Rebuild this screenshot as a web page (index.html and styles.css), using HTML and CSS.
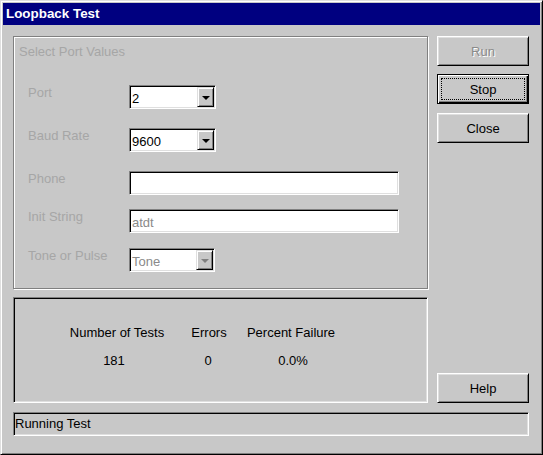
FILE: index.html
```html
<!DOCTYPE html>
<html>
<head>
<meta charset="utf-8">
<link rel="stylesheet" href="styles.css">
<title>Loopback Test</title>
</head>
<body>
<div class="window">
  <div class="titlebar">Loopback Test</div>
  <div class="content">
    <div class="main">
      <div class="leftcol">
        <div class="groupbox">
          <div class="gb-title">Select Port Values</div>
          <div class="row r1">
            <div class="label">Port</div>
            <div class="combo w87"><span class="ctext">2</span><span class="dropbtn"><span class="arrow"></span></span></div>
          </div>
          <div class="row r2">
            <div class="label">Baud Rate</div>
            <div class="combo w87"><span class="ctext">9600</span><span class="dropbtn"><span class="arrow"></span></span></div>
          </div>
          <div class="row r3">
            <div class="label">Phone</div>
            <div class="field w270"></div>
          </div>
          <div class="row r4">
            <div class="label">Init String</div>
            <div class="field w270"><span class="ctext gray">atdt</span></div>
          </div>
          <div class="row r5">
            <div class="label">Tone or Pulse</div>
            <div class="combo w86"><span class="ctext gray">Tone</span><span class="dropbtn"><span class="arrow dis"></span></span></div>
          </div>
        </div>
        <div class="results">
          <div class="rgrid">
            <div class="c1">Number of Tests</div>
            <div class="c2">Errors</div>
            <div class="c3">Percent Failure</div>
            <div class="c1 v1">181</div>
            <div class="c2 v2">0</div>
            <div class="c3 v3">0.0%</div>
          </div>
        </div>
      </div>
      <div class="rightcol">
        <div class="btn disabled">Run</div>
        <div class="btn default"><span class="focus">Stop</span></div>
        <div class="btn">Close</div>
        <div class="btn help">Help</div>
      </div>
    </div>
    <div class="status">Running Test</div>
  </div>
</div>
</body>
</html>
```

FILE: styles.css
```css
* { box-sizing: border-box; }
html, body { margin: 0; padding: 0; background: #c8c8c8; }
body {
  font-family: "Liberation Sans", Arial, sans-serif;
  font-size: 13px;
  color: #000;
}
.window {
  width: 543px;
  height: 455px;
  background: #c8c8c8;
  border: 1px solid;
  border-color: #dfdfdf #000 #000 #dfdfdf;
  box-shadow: inset 1px 1px 0 #fff, inset -1px -1px 0 #808080;
  padding: 2px;
}
.titlebar {
  height: 22px;
  background: #000080;
  color: #fff;
  font-weight: bold;
  font-size: 13.4px;
  line-height: 22px;
  padding-left: 3px;
}
.content {
  padding: 11px 0 0 10px;
}
.main {
  display: flex;
  gap: 9px;
  height: 367px;
}
.leftcol {
  width: 415px;
  display: flex;
  flex-direction: column;
}
.groupbox {
  height: 253px;
  border: 1px solid #808080;
  box-shadow: inset 1px 1px 0 #fff, 1px 1px 0 #fff;
  padding: 7px 0 0 5px;
}
.gb-title {
  color: #a6a6a6;
  line-height: 15px;
  height: 15px;
}
.row {
  display: flex;
  height: 24px;
  padding-left: 9px;
}
.r1 { margin-top: 26px; }
.r2 { margin-top: 19px; }
.r3 { margin-top: 19px; }
.r4 { margin-top: 14px; }
.r5 { margin-top: 15px; }
.label {
  width: 101px;
  color: #a6a6a6;
  line-height: 15px;
}
.combo, .field {
  position: relative;
  height: 24px;
  background: #fff;
  border: 1px solid;
  border-color: #808080 #fff #fff #808080;
  box-shadow: inset 1px 1px 0 #000, inset -1px -1px 0 #dfdfdf;
  display: flex;
  align-items: center;
}
.w87 { width: 87px; }
.w86 { width: 86px; }
.w270 { width: 270px; }
.ctext {
  padding-left: 2px;
  line-height: 15px;
  margin-top: 2px;
}
.gray { color: #8a8a8a; }
.dropbtn {
  position: absolute;
  right: 1px;
  top: 1px;
  width: 17px;
  height: 20px;
  background: #c8c8c8;
  border: 1px solid;
  border-color: #dfdfdf #000 #000 #dfdfdf;
  box-shadow: inset 1px 1px 0 #fff, inset -1px -1px 0 #808080;
  display: flex;
  align-items: center;
  justify-content: center;
}
.arrow {
  width: 0;
  height: 0;
  border-left: 4px solid transparent;
  border-right: 4px solid transparent;
  border-top: 4px solid #000;
  margin-top: 1px;
}
.arrow.dis { border-top-color: #808080; }
.results {
  margin-top: 8px;
  height: 106px;
  border: 1px solid;
  border-color: #808080 #fff #fff #808080;
  box-shadow: inset 1px 1px 0 #000, inset -1px -1px 0 #dfdfdf;
}
.rgrid {
  display: grid;
  grid-template-columns: 100px 84px 80px;
  grid-template-rows: 15px 15px;
  row-gap: 13px;
  justify-items: center;
  padding: 27px 0 0 53px;
  line-height: 15px;
}
.rgrid > div { white-space: nowrap; }
.v1 { margin-right: 6px; }
.v2 { margin-right: 2px; }
.v3 { margin-left: 4px; }
.rightcol {
  width: 92px;
  display: flex;
  flex-direction: column;
}
.btn {
  height: 30px;
  background: #c8c8c8;
  border: 1px solid;
  border-color: #fff #000 #000 #fff;
  box-shadow: inset 1px 1px 0 #dfdfdf, inset -1px -1px 0 #808080;
  display: flex;
  align-items: center;
  justify-content: center;
  line-height: 15px;
  margin-bottom: 8px;
}
.btn.disabled {
  color: #8a8a8a;
  text-shadow: 1px 1px 0 #fff;
}
.btn.default {
  border: 1px solid #000;
  box-shadow: inset 1px 1px 0 #fff, inset -1px -1px 0 #000, inset -2px -2px 0 #808080;
  margin-bottom: 9px;
}
.focus {
  display: flex;
  align-items: center;
  justify-content: center;
  width: 84px;
  height: 22px;
  border: 1px dotted #000;
}
.btn.help {
  margin-top: auto;
  margin-bottom: 0;
}
.status {
  margin-top: 9px;
  width: 516px;
  height: 24px;
  border: 1px solid;
  border-color: #808080 #fff #fff #808080;
  box-shadow: inset 1px 1px 0 #000, inset -1px -1px 0 #dfdfdf;
  line-height: 15px;
  padding: 3px 0 0 1px;
}
```
